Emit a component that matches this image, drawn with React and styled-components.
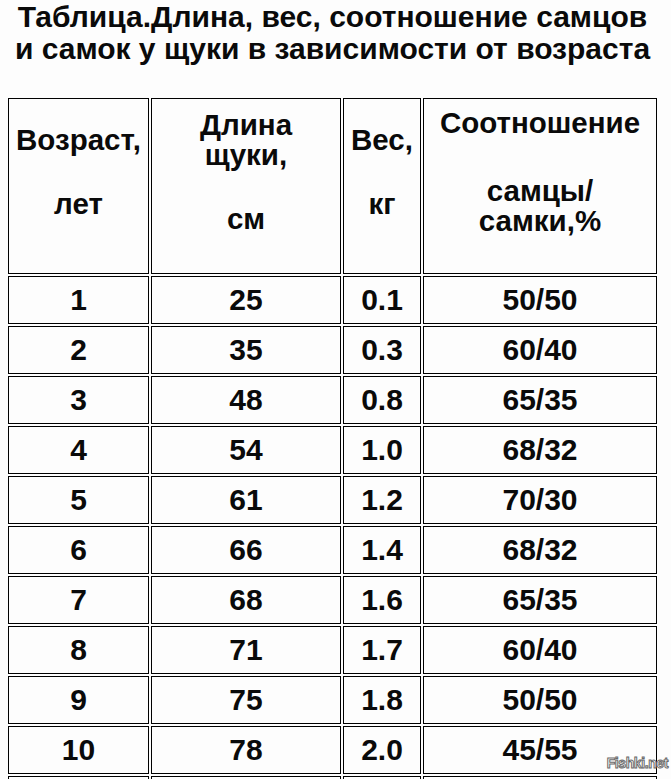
import React from "react";
import styled, { createGlobalStyle } from "styled-components";

const GlobalStyle = createGlobalStyle`
  html, body {
    margin: 0;
    padding: 0;
    background: #fdfdfd;
  }
  body {
    font-family: "Liberation Sans", Arial, sans-serif;
    color: #0a0a0a;
  }
`;

const Page = styled.div`
  position: relative;
  width: 671px;
  padding: 1px 0 0 6px;
  box-sizing: border-box;
`;

const Title = styled.h1`
  width: 653px;
  margin: 0 0 31px 0;
  font-size: 30px;
  line-height: 32px;
  font-weight: bold;
  text-align: center;
  white-space: nowrap;
`;

const Table = styled.table`
  border-collapse: separate;
  border-spacing: 2px;
  table-layout: fixed;
  width: 653px;
`;

const Col = styled.col`
  width: ${(p) => p.$w}px;
`;

const HeadCell = styled.th`
  border: 1px solid #000;
  padding: 0;
  height: 176px;
  box-sizing: border-box;
  font-size: 29.5px;
  font-weight: bold;
`;

const HeadInner = styled.div`
  height: 174px;
  padding-bottom: 28px;
  box-sizing: border-box;
  display: flex;
  flex-direction: column;
  align-items: center;
  justify-content: center;
  gap: ${(p) => p.$gap || 34}px;
`;

const Para = styled.div`
  line-height: 30px;
  text-align: center;
  white-space: nowrap;
`;

const Cell = styled.td`
  border: 1px solid #000;
  padding: 0;
  height: 48px;
  box-sizing: border-box;
  text-align: center;
  vertical-align: middle;
  font-size: 30px;
  font-weight: bold;
`;

const Watermark = styled.div`
  position: absolute;
  right: 3px;
  top: 755px;
  font-family: "Liberation Sans Narrow", "Liberation Sans", sans-serif;
  font-size: 14px;
  font-weight: bold;
  color: #fff;
  -webkit-text-stroke: 1px #6a6a6a;
  letter-spacing: -0.4px;
`;

const rows = [
  ["1", "25", "0.1", "50/50"],
  ["2", "35", "0.3", "60/40"],
  ["3", "48", "0.8", "65/35"],
  ["4", "54", "1.0", "68/32"],
  ["5", "61", "1.2", "70/30"],
  ["6", "66", "1.4", "68/32"],
  ["7", "68", "1.6", "65/35"],
  ["8", "71", "1.7", "60/40"],
  ["9", "75", "1.8", "50/50"],
  ["10", "78", "2.0", "45/55"],
  ["", "", "", ""],
];

export default function App() {
  return (
    <>
      <GlobalStyle />
      <Page>
        <Title>
          Таблица.Длина, вес, соотношение самцов
          <br />и самок у щуки в зависимости от возраста
        </Title>
        <Table>
          <colgroup>
            <Col $w={141} />
            <Col $w={190} />
            <Col $w={78} />
            <Col $w={234} />
          </colgroup>
          <thead>
            <tr>
              <HeadCell>
                <HeadInner>
                  <Para>Возраст,</Para>
                  <Para>лет</Para>
                </HeadInner>
              </HeadCell>
              <HeadCell>
                <HeadInner>
                  <Para>
                    Длина
                    <br />
                    щуки,
                  </Para>
                  <Para>см</Para>
                </HeadInner>
              </HeadCell>
              <HeadCell>
                <HeadInner>
                  <Para>Вес,</Para>
                  <Para>кг</Para>
                </HeadInner>
              </HeadCell>
              <HeadCell>
                <HeadInner $gap={38}>
                  <Para>Соотношение</Para>
                  <Para>
                    самцы/
                    <br />
                    самки,%
                  </Para>
                </HeadInner>
              </HeadCell>
            </tr>
          </thead>
          <tbody>
            {rows.map((r, i) => (
              <tr key={i}>
                {r.map((v, j) => (
                  <Cell key={j}>{v}</Cell>
                ))}
              </tr>
            ))}
          </tbody>
        </Table>
        <Watermark>Fishki.net</Watermark>
      </Page>
    </>
  );
}
